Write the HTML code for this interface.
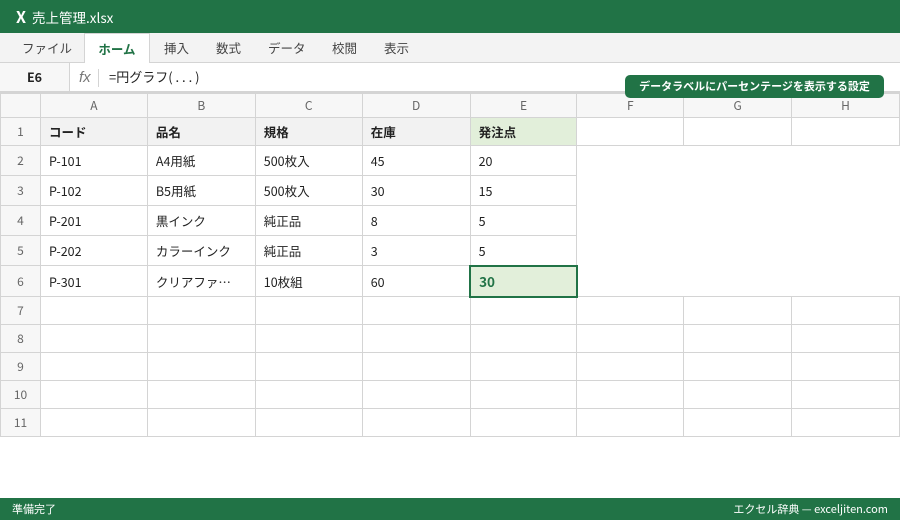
<!DOCTYPE html>
<html><head><meta charset="utf-8"><style>
*{margin:0;padding:0;box-sizing:border-box}
body{width:900px;height:520px;overflow:hidden;background:#fff;font-family:"Noto Sans CJK JP","Liberation Sans",sans-serif;color:#222;position:relative}
.title{position:absolute;left:0;top:0;width:900px;height:33px;background:#217346;color:#fff;font-size:13.5px;line-height:33px;padding-left:16px}
.title b{font-size:16px;margin-right:6px}
.tabs{position:absolute;top:33px;left:0;width:900px;height:30px;background:#f3f3f3;border-bottom:1px solid #d4d4d4}
.tab{position:absolute;top:0;height:30px;line-height:30px;font-size:12.5px;color:#444}
.tab.act{background:#fff;border:1px solid #d4d4d4;border-bottom:none;color:#217346;font-weight:bold;height:31px;text-align:center}
.fbar{position:absolute;top:63px;left:0;width:900px;height:30px;background:#fff;border-bottom:2px solid #d4d4d4}
.name{position:absolute;left:0;top:0;width:70px;height:28px;line-height:28px;text-align:center;font-size:12.5px;font-weight:bold;background:#f7f7f7;border-right:1px solid #d4d4d4}
.fx{position:absolute;left:79px;top:0;line-height:30px;font-style:italic;color:#777;font-size:15px;font-family:"Liberation Sans",sans-serif}
.sep{position:absolute;left:98px;top:6px;height:18px;border-left:1px solid #d4d4d4}
.fml{position:absolute;left:109px;top:0;line-height:28px;font-size:13px;white-space:pre}
.tip{position:absolute;left:625px;top:75px;width:259px;height:23px;background:#217346;color:#fff;border-radius:5px;font-size:11px;font-weight:bold;text-align:center;line-height:23px;z-index:2}
table{position:absolute;top:93px;left:0;border-collapse:collapse;table-layout:fixed;font-size:12.5px}
td{border:1px solid #d4d4d4;padding:0 0 0 8px;white-space:nowrap;overflow:hidden}
tr.h td{background:#f7f7f7;color:#666;text-align:center;height:24px;padding:0;font-size:12px;line-height:20px}
td.r{background:#f7f7f7;color:#666;text-align:center;padding:0;font-size:12px}
tr.r1 td{height:28px;font-weight:bold;background:#f2f2f2}
tr.r1 td.r{font-weight:normal;background:#f7f7f7}
tr.r1 td.e{background:#e2efda}
tr.r1 td.w{background:#fff}
tr.d td{height:30px}
tr.d td.n{border:none}
tr.x td{height:28px}
td.sel{background:#e2efda;border:2px solid #217346;color:#217346;font-weight:bold;font-size:13.5px}
.status{position:absolute;left:0;top:498px;width:900px;height:22px;background:#217346;color:#fff;font-size:11px;line-height:22px;padding:0 12px}
.status span{float:right}
</style></head><body>
<div class="title"><b>X</b>売上管理.xlsx</div>
<div class="tabs">
<div class="tab" style="left:22px">ファイル</div>
<div class="tab act" style="left:84px;width:66px">ホーム</div>
<div class="tab" style="left:164px">挿入</div>
<div class="tab" style="left:216px">数式</div>
<div class="tab" style="left:268px">データ</div>
<div class="tab" style="left:332px">校閲</div>
<div class="tab" style="left:384px">表示</div>
</div>
<div class="fbar"><div class="name">E6</div><div class="fx">fx</div><div class="sep"></div><div class="fml">=円グラフ( . . . )</div></div>
<div class="tip">データラベルにパーセンテージを表示する設定</div>
<table>
<colgroup><col style="width:40px"><col style="width:107px"><col style="width:108px"><col style="width:107px"><col style="width:108px"><col style="width:107px"><col style="width:107px"><col style="width:108px"><col style="width:108px"></colgroup>
<tr class="h"><td></td><td>A</td><td>B</td><td>C</td><td>D</td><td>E</td><td>F</td><td>G</td><td>H</td></tr>
<tr class="r1"><td class="r">1</td><td>コード</td><td>品名</td><td>規格</td><td>在庫</td><td class="e">発注点</td><td class="w"></td><td class="w"></td><td class="w"></td></tr>
<tr class="d"><td class="r">2</td><td>P-101</td><td>A4用紙</td><td>500枚入</td><td>45</td><td>20</td><td class="n"></td><td class="n"></td><td class="n"></td></tr>
<tr class="d"><td class="r">3</td><td>P-102</td><td>B5用紙</td><td>500枚入</td><td>30</td><td>15</td><td class="n"></td><td class="n"></td><td class="n"></td></tr>
<tr class="d"><td class="r">4</td><td>P-201</td><td>黒インク</td><td>純正品</td><td>8</td><td>5</td><td class="n"></td><td class="n"></td><td class="n"></td></tr>
<tr class="d"><td class="r">5</td><td>P-202</td><td>カラーインク</td><td>純正品</td><td>3</td><td>5</td><td class="n"></td><td class="n"></td><td class="n"></td></tr>
<tr class="d"><td class="r">6</td><td>P-301</td><td>クリアファ…</td><td>10枚組</td><td>60</td><td class="sel" style="height:31px">30</td><td class="n"></td><td class="n"></td><td class="n"></td></tr>
<tr class="x"><td class="r">7</td><td></td><td></td><td></td><td></td><td></td><td></td><td></td><td></td></tr>
<tr class="x"><td class="r">8</td><td></td><td></td><td></td><td></td><td></td><td></td><td></td><td></td></tr>
<tr class="x"><td class="r">9</td><td></td><td></td><td></td><td></td><td></td><td></td><td></td><td></td></tr>
<tr class="x"><td class="r">10</td><td></td><td></td><td></td><td></td><td></td><td></td><td></td><td></td></tr>
<tr class="x"><td class="r">11</td><td></td><td></td><td></td><td></td><td></td><td></td><td></td><td></td></tr>
</table>
<div class="status">準備完了<span>エクセル辞典 — exceljiten.com</span></div>
</body></html>
